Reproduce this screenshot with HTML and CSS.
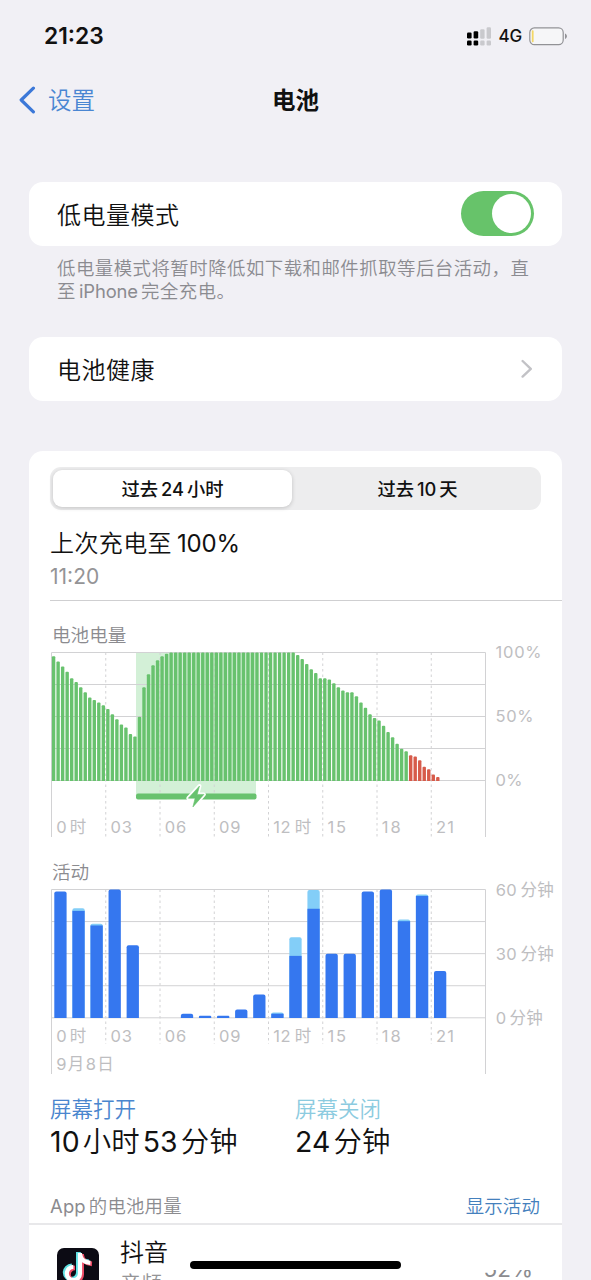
FILE: index.html
```html
<!DOCTYPE html>
<html lang="zh-CN">
<head>
<meta charset="utf-8">
<title>电池</title>
<link rel="stylesheet" href="styles.css">
</head>
<body>
<div class="screen">
  <header class="status">
    <span class="clock">21:23</span>
    <div class="status-right">
      <svg class="signal" width="25" height="19" viewBox="0 0 25 19">
        <g fill="#000"><rect x="0" y="5.5" width="4.6" height="6" rx="1.2"/><rect x="6.6" y="4.3" width="4.6" height="7.2" rx="1.2"/><rect x="0" y="13.5" width="4.6" height="5" rx="1.2"/><rect x="6.6" y="13.5" width="4.6" height="5" rx="1.2"/></g>
        <g fill="#c9c9cd"><rect x="13.2" y="2.3" width="4.4" height="9.4" rx="1.2"/><rect x="19.6" y="0.3" width="4.4" height="11.4" rx="1.2"/><rect x="13.2" y="13.5" width="4.4" height="5" rx="1.2"/><rect x="19.6" y="13.5" width="4.4" height="5" rx="1.2"/></g>
      </svg>
      <span class="net">4G</span>
      <svg class="batt" width="39" height="19" viewBox="0 0 39 19">
        <rect x="0.8" y="0.9" width="33.4" height="16.8" rx="4.6" fill="#f6f6f8" stroke="#929296" stroke-width="1.2"/>
        <rect x="2.8" y="3.2" width="1.8" height="12" rx="0.8" fill="#f3d765"/>
        <path d="M36 6.6c2.6 1 2.6 4.4 0 5.4z" fill="#929296"/>
      </svg>
    </div>
  </header>

  <nav class="nav">
    <div class="back">
      <svg width="17" height="28" viewBox="0 0 17 28"><path d="M14.400 2.200 2.200 14l12.200 11.800" fill="none" stroke="#3c78d8" stroke-width="3.200" stroke-linecap="round" stroke-linejoin="round"/></svg>
      <span class="back-label">设置</span>
    </div>
    <h1 class="nav-title">电池</h1>
  </nav>

  <section class="card row low-power">
    <span class="row-label">低电量模式</span>
    <span class="switch"><span class="knob"></span></span>
  </section>
  <p class="note">低电量模式将暂时降低如下载和邮件抓取等后台活动，直<br>至<span class="latin phone">iPhone</span>完全充电。</p>

  <section class="card row health">
    <span class="row-label">电池健康</span>
    <svg class="chevron" width="12" height="20" viewBox="0 0 12 20"><path d="M1.600 2 9.800 9.800 1.600 17.600" fill="none" stroke="#c2c2c6" stroke-width="2.400" stroke-linecap="round" stroke-linejoin="round"/></svg>
  </section>

  <section class="card usage">
    <div class="segments">
      <span class="seg active">过去<span class="latin">24</span>小时</span>
      <span class="seg other">过去<span class="latin">10</span>天</span>
    </div>
    <div class="charge">
      <div class="charge-title">上次充电至<span class="latin pct">100%</span></div>
      <div class="charge-time">11:20</div>
    </div>

    <h2 class="chart-label">电池电量</h2>
    <svg class="chart" id="level" width="533" height="200" viewBox="29 645 533 200"></svg>
    <h2 class="chart-label activity-label">活动</h2>
    <svg class="chart" id="activity" width="533" height="196" viewBox="29 884 533 196"></svg>

    <div class="totals">
      <div class="total"><span class="total-name on">屏幕打开</span><span class="total-value"><span class="latin first">10</span>小时<span class="latin">53</span>分钟</span></div>
      <div class="total"><span class="total-name off">屏幕关闭</span><span class="total-value"><span class="latin first">24</span>分钟</span></div>
    </div>
    <div class="apps-head">
      <span><span class="latin first">App</span>的电池用量</span>
      <span class="link">显示活动</span>
    </div>
    <div class="app">
      <svg class="app-icon" width="42" height="42" viewBox="0 0 42 42">
        <rect width="42" height="42" rx="7" fill="#0c0b14"/>
        <g fill="none" stroke-width="4.800">
          <path stroke="#5fe0e2" d="M21.400 4v20.500a6.600 6.600 0 1 1-6.600-6.600M21.400 5c.6 5 4 8.400 10.400 8.800"/>
          <path stroke="#ee4b66" d="M24.600 6v20.500a6.600 6.600 0 1 1-6.600-6.600M24.600 7c.6 5 4 8.400 10.400 8.800"/>
          <path stroke="#fff" d="M23 5v20.500a6.600 6.600 0 1 1-6.600-6.600M23 6c.6 5 4 8.400 10.400 8.800" stroke-width="4.200"/>
        </g>
      </svg>
      <div class="app-text"><span class="app-name">抖音</span><span class="app-kind">音频</span></div>
      <span class="app-share">52%</span>
    </div>
  </section>
  <div class="home"></div>
</div>
<script src="charts.js"></script>
</body>
</html>
```
FILE: styles.css
```css
* { box-sizing: border-box; }
body {
  margin: 0;
  background: #f1f0f5;
  color: #111;
  font-family: Inter, "Noto Sans CJK SC", sans-serif;
  font-weight: 350;
}
.screen {
  position: relative;
  width: 591px;
  height: 1280px;
  overflow: hidden;
}
.latin { margin: 0 3px; font-weight: 400; }
.seg .latin { font-weight: 500; }
.latin.first { margin-left: 0; }

.status {
  display: flex;
  justify-content: space-between;
  align-items: center;
  height: 72px;
  padding: 0 23px 0 44px;
}
.clock { padding-bottom: 1px; font-size: 22.800px; font-weight: 600; }
.status-right { display: flex; align-items: center; }
.net { margin: 0 7px 0 7px; font-size: 17px; font-weight: 500; letter-spacing: -0.200px; }

.nav {
  display: grid;
  grid-template-columns: 1fr auto 1fr;
  align-items: center;
  height: 56px;
  padding: 0 19px;
}
.back { display: flex; align-items: center; gap: 12px; }
.back-label { padding-top: 2px; color: #4a86d2; font-size: 23.500px; line-height: 30px; }
.nav-title { margin: 0; padding-top: 2px; font-size: 23.500px; line-height: 30px; font-weight: 700; }

.card { margin: 0 29px; background: #fff; border-radius: 14px; }
.row {
  display: flex;
  justify-content: space-between;
  align-items: center;
  height: 64px;
  padding: 0 28px;
}
.low-power { margin-top: 54px; }
.row-label { padding-top: 3px; font-size: 24px; line-height: 34px; letter-spacing: 0.500px; }
.switch {
  width: 73px;
  height: 45px;
  margin-bottom: 1px;
  padding: 3px;
  border-radius: 23px;
  background: #67c36a;
  display: flex;
  justify-content: flex-end;
}
.knob { width: 39px; height: 39px; border-radius: 50%; background: #fff; }
.note {
  margin: 11px 0 0;
  padding-left: 57px;
  color: #8b8b90;
  font-size: 18.400px;
  line-height: 23px;
  letter-spacing: 0.500px;
  white-space: nowrap;
}
.phone { letter-spacing: -0.100px; }
.health { margin-top: 34px; }
.chevron { margin-right: 1px; }

.usage { margin-top: 50px; height: 860px; padding-top: 16px; }
.segments {
  display: grid;
  grid-template-columns: 239px 1fr;
  width: 491px;
  height: 43px;
  margin-left: 21px;
  padding: 3px;
  border-radius: 11px;
  background: #ededee;
}
.seg {
  font-size: 18.300px;
  line-height: 39px;
  text-align: center;
  font-weight: 500;
}
.other { padding-left: 5px; }
.active { height: 37px; border-radius: 9px; background: #fff; box-shadow: 0 1px 4px rgba(0, 0, 0, 0.18); }
.charge {
  height: 91px;
  margin-left: 21px;
  padding-top: 17px;
  border-bottom: 1px solid #cfcfd1;
}
.charge-title { font-size: 24px; line-height: 34px; letter-spacing: 0.400px; }
.pct { margin-left: 5px; letter-spacing: -0.200px; }
.charge-time { color: #949496; font-size: 21px; line-height: 31px; font-weight: 400; }
.chart-label {
  margin: 24px 0 0 23px;
  height: 20px;
  color: #8b8b8f;
  font-size: 18.600px;
  line-height: 20px;
  font-weight: 350;
}
.activity-label { margin-top: 17px; height: 22px; }
.chart { display: block; overflow: visible; }
.grid { stroke: #d2d2d4; stroke-width: 1; fill: none; }
.dash { stroke: #d2d2d4; stroke-width: 1; stroke-dasharray: 2.500 3; }
.axis-text { fill: #bebec1; font-size: 16.500px; font-weight: 400; }

.totals {
  display: grid;
  grid-template-columns: 245px 1fr;
  margin: 15px 0 0 21px;
}
.total { display: flex; flex-direction: column; }
.total-name { font-size: 21.500px; line-height: 28px; }
.on { color: #4a86ce; }
.off { color: #8ccbe0; }
.total-value { font-size: 28.400px; line-height: 38px; letter-spacing: 0.100px; white-space: nowrap; }
.apps-head {
  display: flex;
  justify-content: space-between;
  margin-top: 27px;
  height: 35px;
  padding: 0 22px 0 21px;
  color: #8b8b8f;
  font-size: 18.400px;
  line-height: 37px;
  letter-spacing: 0.200px;
}
.link { color: #4480bd; }
.app {
  display: flex;
  align-items: flex-start;
  border-top: 2px solid #e8e8ea;
  padding: 0 29px 0 28px;
}
.app-icon { margin-top: 23px; }
.app-text { display: flex; flex-direction: column; margin-left: 21px; padding-top: 11px; }
.app-name { font-size: 24px; line-height: 34px; }
.app-kind { color: #949496; font-size: 21px; line-height: 28px; }
.app-share {
  margin: 32px 0 0 auto;
  color: #8b8b8f;
  font-size: 22.500px;
  line-height: 24px;
  font-weight: 400;
  clip-path: inset(13px 0 0 0);
}
.home {
  position: absolute;
  left: 190px;
  top: 1261px;
  width: 211px;
  height: 8px;
  border-radius: 4px;
  background: #000;
}
```
FILE: charts.js
```js
const NS = "http://www.w3.org/2000/svg";
function add(parent, tag, attrs, text) {
  const el = document.createElementNS(NS, tag);
  for (const k in attrs) el.setAttribute(k, attrs[k]);
  if (text) el.textContent = text;
  parent.appendChild(el);
}
const LEFT = 51.5, RIGHT = 485.5, STEP = 54.25;
const hours = ["0\u2009时", "03", "06", "09", "12\u2009时", "15", "18", "21"];
const widths = [30, 21.500, 21.500, 21.500, 38, 18.500, 19, 18];

function axes(svg, top, bottom, labelY, dashEnd, solidEnd) {
  for (let i = 0; i < 5; i++) {
    const y = top + (bottom - top) * i / 4;
    add(svg, "line", { class: "grid", x1: LEFT, x2: RIGHT, y1: y, y2: y });
  }
  for (const x of [LEFT, RIGHT]) add(svg, "line", { class: "grid", x1: x, x2: x, y1: top, y2: solidEnd });
  hours.forEach((h, i) => {
    const x = LEFT + STEP * i;
    if (i) add(svg, "line", { class: "dash", x1: x, x2: x, y1: top, y2: dashEnd });
    add(svg, "text", { class: "axis-text", x: x + 4.700, y: labelY, textLength: widths[i] }, h);
  });
}

/* Battery level, one bar per quarter hour, in percent. */
const level = document.getElementById("level");
const levels = [97, 93, 89, 85, 80, 77, 73, 69, 65, 63, 61, 59, 56, 52, 48, 44, 41.500, 36.500, 34.500,
  50, 73, 83, 90, 94, 97, 99].concat(Array(28).fill(100),
  [98, 95, 91, 87, 84, 80, 80, 79, 76, 73, 70.500, 69, 69, 66, 61, 57, 52, 49, 47, 43, 38, 34, 29, 25, 23,
  20, 19, 16, 11, 9, 5, 3]);
add(level, "rect", { x: 136, y: 652.500, width: 120, height: 142, fill: "#d3f0d7" });
axes(level, 652.500, 780.500, 833, 837, 837);
levels.forEach((v, i) => {
  const h = v * 1.284, x = 51.900 + i * 4.520, y = 780.900 - h;
  add(level, "path", { d: `M${x} 780.900V${y + 1}q0-1 1-1h1.400q1 0 1 1V780.900z`, fill: i > 78 ? "#d75b4a" : "#68c26e" });
});
add(level, "rect", { x: 136, y: 793.500, width: 120.500, height: 6, rx: 2, fill: "#68c26e" });
const bolt = "M199.500 786 188.300 798.200h6.800l-2.200 8.800 11-12.600h-6.700z";
add(level, "path", { d: bolt, fill: "#fff", stroke: "#fff", "stroke-width": 4, "stroke-linejoin": "round" });
add(level, "path", { d: bolt, fill: "#68c26e", stroke: "#68c26e", "stroke-width": 0.600, "stroke-linejoin": "round" });
[["100%", 657.800, 46], ["50%", 722, 38], ["0%", 786.300, 27]].forEach(([t, y, w]) =>
  add(level, "text", { class: "axis-text", x: 495.500, y, textLength: w }, t));

/* Minutes of activity per hour: total, then screen-on share. */
const activity = document.getElementById("activity");
const minutes = [[59, 59], [51.200, 50], [44, 43.200], [60, 60], [34, 34], [0, 0], [0, 0], [2, 2], [1, 1], [1, 1],
  [4, 4], [11, 11], [2.600, 2], [37.700, 29], [59.800, 51], [30, 30], [30, 30], [59, 59], [60, 60], [46, 45.200], [57.600, 57], [22, 22]];
axes(activity, 889.500, 1017.800, 1041.700, 1044, 1074);
minutes.forEach(([all, on], i) => {
  if (!all) return;
  const x = 54.300 + i * 18.080, top = 1018 - all * 2.142, r = Math.min(2, all);
  const shape = y => `M${x} 1018V${y + r}q0-${r} ${r}-${r}h${12.300 - 2 * r}q${r} 0 ${r} ${r}V1018z`;
  add(activity, "path", { d: shape(top), fill: all > on ? "#83cef8" : "#3577ef" });
  const y = 1018 - on * 2.142;
  if (all > on) add(activity, "rect", { x, y, width: 12.300, height: 1018 - y, fill: "#3577ef" });
});
add(activity, "text", { class: "axis-text", x: 56.200, y: 1070, textLength: 57.500 }, "9月8日");
[["60\u2009分钟", 895.500, 58], ["30\u2009分钟", 959.800, 58], ["0\u2009分钟", 1024, 47]].forEach(([t, y, w]) =>
  add(activity, "text", { class: "axis-text", x: 495.800, y, textLength: w }, t));
```
